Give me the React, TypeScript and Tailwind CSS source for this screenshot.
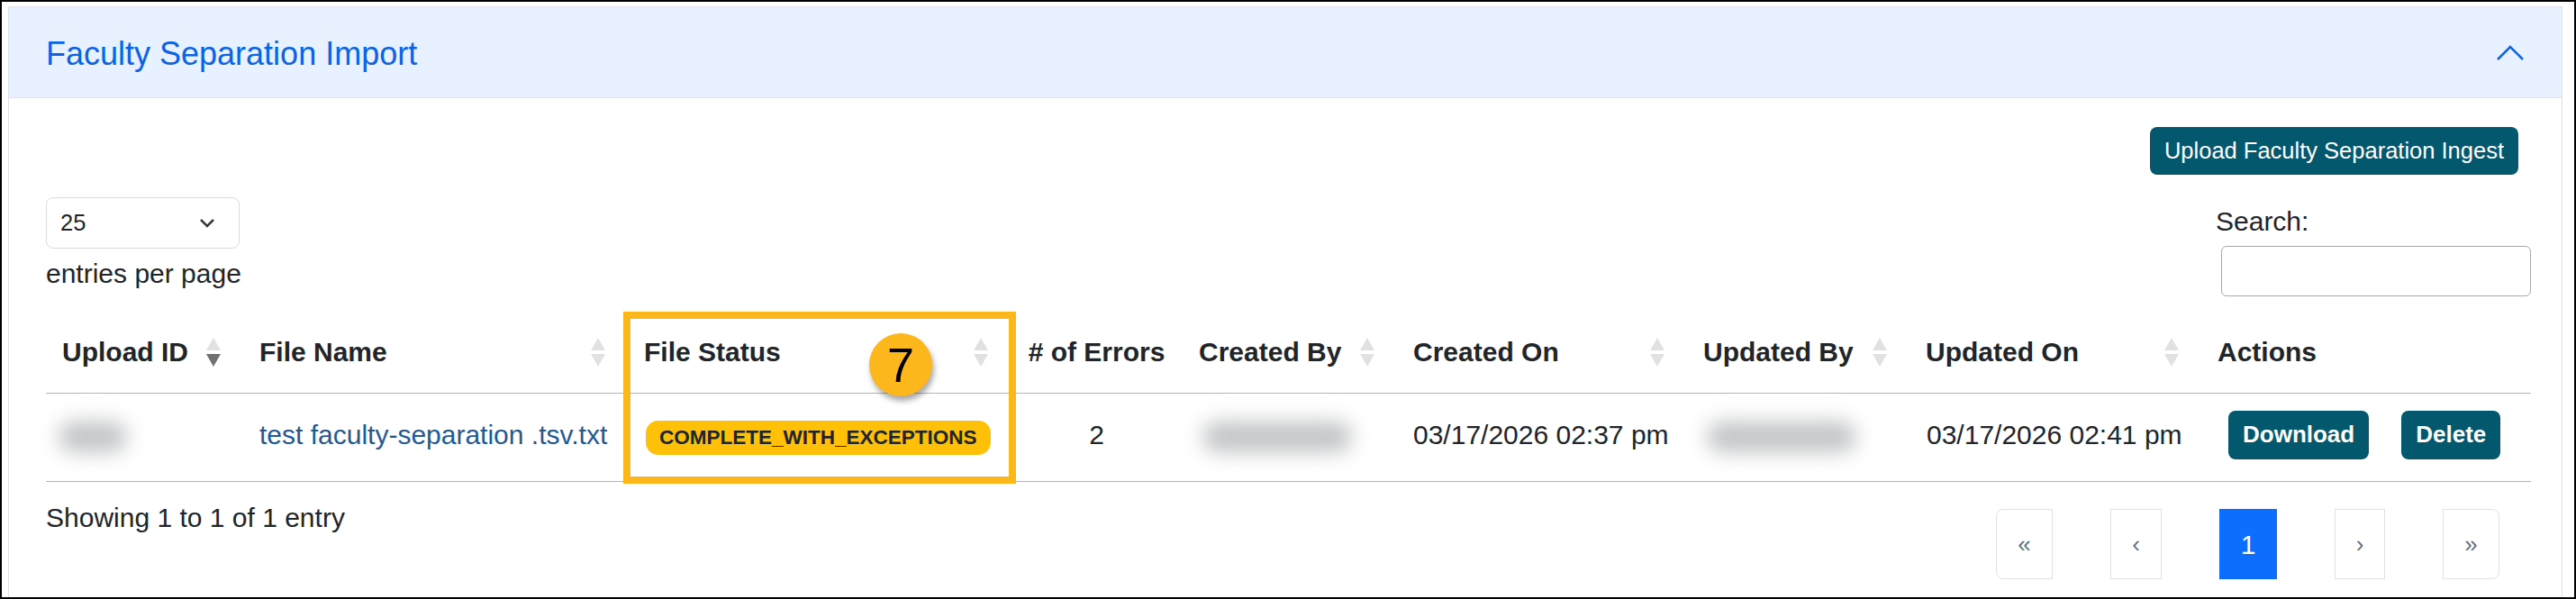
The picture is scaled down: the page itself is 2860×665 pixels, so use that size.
import React from 'react';

const cols =
  'grid grid-cols-[219px_427px_425px_191px_238px_322px_247px_324px_363px]';

function SortIcon({ active }: { active?: boolean }) {
  return (
    <svg width="16" height="32" viewBox="0 0 16 32" aria-hidden>
      <polygon points="8,0 16,14 0,14" fill="#dfe1e3" />
      <polygon points="0,18 16,18 8,32" fill={active ? '#707070' : '#dfe1e3'} />
    </svg>
  );
}

function Th({ label, sort, active }: { label: string; sort?: boolean; active?: boolean }) {
  return (
    <div className="flex items-center justify-between pl-[18px] pr-[25px] font-bold">
      <span>{label}</span>
      {sort && <SortIcon active={active} />}
    </div>
  );
}

function Blur({ w }: { w: number }) {
  return (
    <span
      className="inline-block h-[34px] rounded-full bg-[#c2c4c6] align-middle blur-[11px]"
      style={{ width: w }}
    />
  );
}

function PageBox({
  children,
  w,
  className = '',
}: {
  children: React.ReactNode;
  w: number;
  className?: string;
}) {
  return (
    <div
      className={`flex h-[78px] items-center justify-center ${className}`}
      style={{ width: w }}
    >
      {children}
    </div>
  );
}

export default function App() {
  return (
    <div className="h-[665px] w-[2860px] overflow-hidden border-2 border-black bg-white pl-[7px] pr-[13px] pt-[5px] font-['Liberation_Sans',Arial,sans-serif] text-[30px] leading-[45px] text-[#212529]">
      <div className="border border-[#dee2e6] pb-[60px]">
        {/* accordion header */}
        <div className="flex h-[101px] items-center justify-between border-b border-[#dee2e6] bg-[#e7f1ff] pl-[41px] pr-[41px] pt-[2px]">
          <h2 className="text-[36px] text-[#0c63e4]">Faculty Separation Import</h2>
          <svg width="32" height="18" viewBox="0 0 32 18" aria-hidden>
            <path d="M2 16 L16 2 L30 16" fill="none" stroke="#0c63e4" strokeWidth="2.5" />
          </svg>
        </div>

        <div className="pl-[41px] pr-[34px] pt-[32px]">
          <div className="flex justify-end pr-[14px]">
            <button
              type="button"
              className="h-[53px] rounded-[8px] bg-[#04586e] px-[16px] text-[25.5px] text-white"
            >
              Upload Faculty Separation Ingest
            </button>
          </div>

          <div className="mt-[25px] flex items-start justify-between">
            <div>
              <div className="flex h-[57px] w-[215px] items-center justify-between rounded-[8px] border border-[#d9dce1] pl-[15px] pr-[26px] text-[25.5px]">
                <span>25</span>
                <svg width="18" height="11" viewBox="0 0 18 11" aria-hidden>
                  <path d="M2 2 L9 9 L16 2" fill="none" stroke="#343a40" strokeWidth="2.5" />
                </svg>
              </div>
              <div className="mt-[5px]">entries per page</div>
            </div>
            <div className="flex flex-col items-start pt-[4px]">
              <span>Search:</span>
              <input
                type="text"
                className="ml-[6px] mt-[5px] h-[56px] w-[344px] rounded-[6px] border border-[#a9a9a9] outline-none"
              />
            </div>
          </div>

          {/* table */}
          <div className="relative mt-[14px]">
            <div className={`${cols} h-[94px] items-center border-b border-[#b4b4b4] pt-[2px]`}>
              <Th label="Upload ID" sort active />
              <Th label="File Name" sort />
              <Th label="File Status" sort />
              <div className="text-center font-bold">#&nbsp;of Errors</div>
              <Th label="Created By" sort />
              <Th label="Created On" sort />
              <Th label="Updated By" sort />
              <Th label="Updated On" sort />
              <Th label="Actions" />
            </div>
            <div className={`${cols} h-[98px] items-center border-b border-[#b4b4b4] pb-[6px]`}>
              <div className="pl-[14px]">
                <Blur w={76} />
              </div>
              <div className="pl-[18px]">
                <a className="text-[#1f5a96]">test faculty-separation .tsv.txt</a>
              </div>
              <div className="pl-[20px]">
                <span className="inline-flex h-[38px] items-center rounded-[14px] bg-[#ffc107] px-[15px] text-[22.5px] font-bold">
                  COMPLETE_WITH_EXCEPTIONS
                </span>
              </div>
              <div className="text-center">2</div>
              <div className="pl-[22px]">
                <Blur w={166} />
              </div>
              <div className="pl-[18px]">03/17/2026 02:37 pm</div>
              <div className="pl-[22px]">
                <Blur w={166} />
              </div>
              <div className="pl-[19px]">03/17/2026 02:41 pm</div>
              <div className="flex gap-[36px] pl-[30px]">
                <button
                  type="button"
                  className="h-[54px] rounded-[8px] bg-[#04586e] px-[16px] text-[26px] font-bold text-white"
                >
                  Download
                </button>
                <button
                  type="button"
                  className="h-[54px] rounded-[8px] bg-[#04586e] px-[16px] text-[26px] font-bold text-white"
                >
                  Delete
                </button>
              </div>
            </div>

            {/* annotation overlay */}
            <div className="absolute left-[641px] top-[3px] h-[191px] w-[436px] border-[8px] border-[#fcb71d]" />
            <div className="absolute left-[914px] top-[27px] flex h-[70px] w-[70px] items-center justify-center rounded-full bg-[#fcb71d] text-[54px] leading-none text-black shadow-[2px_5px_6px_rgba(0,0,0,0.35)]">
              7
            </div>
          </div>

          {/* footer */}
          <div className="flex items-start justify-between">
            <div className="mt-[17px]">Showing 1 to 1 of 1 entry</div>
            <div className="mr-[35px] mt-[30px] flex gap-[64px] text-[26px] text-[#5f6f84]">
              <PageBox w={63} className="rounded-l-[8px] border border-[#dee2e6]">«</PageBox>
              <PageBox w={57} className="border border-[#dee2e6]">‹</PageBox>
              <PageBox w={64} className="bg-[#0d6efd] text-[30px] text-white">1</PageBox>
              <PageBox w={56} className="border border-[#dee2e6]">›</PageBox>
              <PageBox w={63} className="rounded-r-[8px] border border-[#dee2e6]">»</PageBox>
            </div>
          </div>
        </div>
      </div>
    </div>
  );
}
